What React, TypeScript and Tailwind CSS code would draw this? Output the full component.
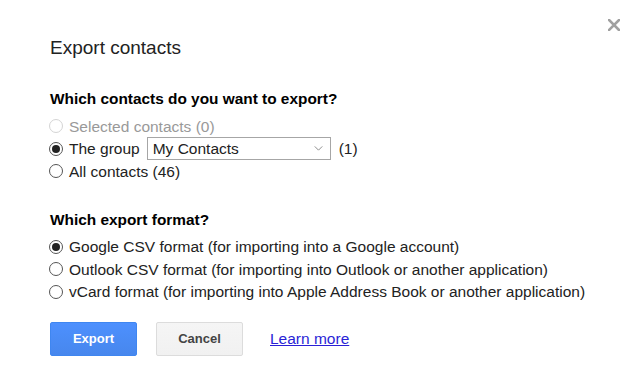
import React from "react";

type RadioProps = {
  checked?: boolean;
  disabled?: boolean;
};

const Radio = ({ checked, disabled }: RadioProps) => (
  <span
    className={`flex items-center justify-center w-[14px] h-[14px] rounded-full border bg-white shrink-0 ${
      disabled ? "border-[#d4d4d4]" : "border-[#555]"
    }`}
  >
    {checked && <span className="w-[8px] h-[8px] rounded-full bg-[#222]" />}
  </span>
);

const Row = ({
  children,
  checked,
  disabled,
}: {
  children: React.ReactNode;
  checked?: boolean;
  disabled?: boolean;
}) => (
  <div className="flex items-center h-[22.5px] gap-[6px]">
    <Radio checked={checked} disabled={disabled} />
    <div className="flex items-center">{children}</div>
  </div>
);

export default function App() {
  return (
    <div className="relative w-[640px] h-[392px] bg-white text-[#222] font-['Liberation_Sans',Arial,sans-serif] pl-[49px] pt-[36px]">
      <button className="absolute top-[19px] right-[20px] w-[12px] h-[12px]" aria-label="Close">
        <svg viewBox="0 0 12 12" className="w-[12px] h-[12px]">
          <path d="M1 1L11 11M11 1L1 11" stroke="#a0a0a0" strokeWidth="2.6" strokeLinecap="square" />
        </svg>
      </button>

      <h1 className="text-[19px] leading-[24px] ml-[1px]">Export contacts</h1>

      <h2 className="mt-[29px] ml-[1px] text-[15.4px] leading-[20px] font-bold text-black">
        Which contacts do you want to export?
      </h2>
      <div className="mt-[6px] text-[15.5px]">
        <Row disabled>
          <span className="text-[#999]">Selected contacts (0)</span>
        </Row>
        <Row checked>
          <span>The group</span>
          <div className="ml-[7px] flex items-center justify-between w-[184px] h-[23px] border border-[#a6a6a6] pl-[5px] pr-[7px]">
            <span>My Contacts</span>
            <svg viewBox="0 0 10 6" className="w-[9px] h-[5px]">
              <path d="M0.5 0.5L5 5L9.5 0.5" fill="none" stroke="#777" strokeWidth="1" />
            </svg>
          </div>
          <span className="ml-[8px]">(1)</span>
        </Row>
        <Row>
          <span>All contacts (46)</span>
        </Row>
      </div>

      <h2 className="mt-[27px] ml-[1px] text-[15.4px] leading-[20px] font-bold text-black">
        Which export format?
      </h2>
      <div className="mt-[6px] text-[15.5px]">
        <Row checked>
          <span>Google CSV format (for importing into a Google account)</span>
        </Row>
        <Row>
          <span>Outlook CSV format (for importing into Outlook or another application)</span>
        </Row>
        <Row>
          <span>vCard format (for importing into Apple Address Book or another application)</span>
        </Row>
      </div>

      <div className="mt-[19px] ml-[1px] flex items-center">
        <button className="w-[87px] h-[34px] rounded-[2px] border border-[#3f86f0] bg-gradient-to-b from-[#4d90fe] to-[#4787ed] text-white text-[13px] font-bold">
          Export
        </button>
        <button className="ml-[19px] w-[87px] h-[34px] rounded-[2px] border border-[#dcdcdc] bg-gradient-to-b from-[#f5f5f5] to-[#f1f1f1] text-[#444] text-[13px] font-bold">
          Cancel
        </button>
        <a href="#" className="ml-[27px] text-[15.5px] text-[#2a1fd6] underline">
          Learn more
        </a>
      </div>
    </div>
  );
}
